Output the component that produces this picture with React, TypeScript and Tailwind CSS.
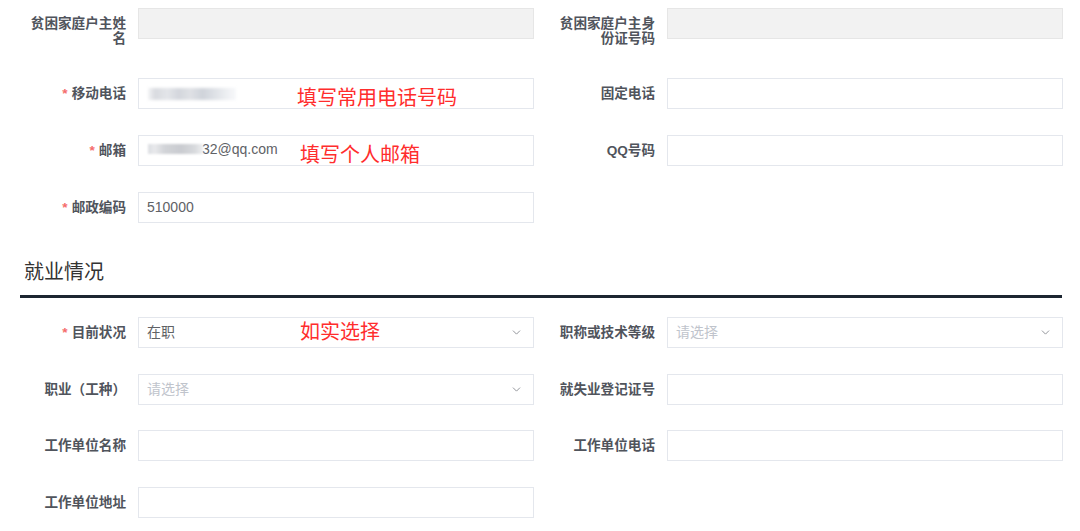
import React from "react";
import { ChevronDown } from "lucide-react";

const FONT = { fontFamily: '"Liberation Sans", "Noto Sans CJK SC", sans-serif' };

function Label({ text, required }: { text: string; required?: boolean }) {
  return (
    <div className="flex justify-end pr-3 w-full">
      <div className="w-[104px] text-right pt-[8px] text-[13.6px] leading-[15px] font-bold text-[#50545c]">
        {required && <span className="text-[#f56c6c] mr-[4px] font-bold">*</span>}
        {text}
      </div>
    </div>
  );
}

function Input({
  disabled,
  children,
  select,
  placeholder,
}: {
  disabled?: boolean;
  children?: React.ReactNode;
  select?: boolean;
  placeholder?: string;
}) {
  return (
    <div
      className={
        "relative w-[396px] h-[31px] border flex items-center px-[8px] text-[14px] text-[#606266] " +
        (disabled ? "bg-[#f2f2f2] border-[#e6e6e6]" : "bg-white border-[#e4e7ed]")
      }
    >
      {placeholder ? <span className="text-[#c0c4cc]">{placeholder}</span> : children}
      {select && (
        <ChevronDown size={13} strokeWidth={1.8} className="absolute right-[10px] top-[8px] text-[#909399]" />
      )}
    </div>
  );
}

function Field({
  label,
  required,
  labelW,
  children,
}: {
  label: string;
  required?: boolean;
  labelW: string;
  children: React.ReactNode;
}) {
  return (
    <div className="flex items-start">
      <div className={labelW}>
        <Label text={label} required={required} />
      </div>
      {children}
    </div>
  );
}

function Row({ className, children }: { className?: string; children: React.ReactNode }) {
  return <div className={"flex items-start gap-[4px] h-[31px] " + (className || "")}>{children}</div>;
}

const Note = ({ text, className }: { text: string; className: string }) => (
  <span className={"absolute text-[20px] leading-[24px] text-[#ff2d2d] " + className}>{text}</span>
);

export default function App() {
  const L = "w-[138px] shrink-0";
  const R = "w-[129px] shrink-0";
  return (
    <div className="w-[1080px] h-[531px] bg-white pt-[8px] overflow-hidden" style={FONT}>
      <Row className="mb-[39px]">
        <Field label="贫困家庭户主姓名" labelW={L}>
          <Input disabled />
        </Field>
        <Field label="贫困家庭户主身份证号码" labelW={R}>
          <Input disabled />
        </Field>
      </Row>
      <Row className="mb-[26px]">
        <Field label="移动电话" required labelW={L}>
          <Input>
            <div
              className="w-[88px] h-[12px] mt-[1px] ml-[1px]"
              style={{
                background:
                  "linear-gradient(90deg,#f3f4f6 0%,#d8dadf 8%,#e3e5e9 22%,#d3d6dc 35%,#dfe1e5 48%,#cfd3da 62%,#dde0e5 75%,#eef0f3 90%,#f7f8fa 100%)",
                filter: "blur(1.5px)",
              }}
            />
            <Note text="填写常用电话号码" className="left-[158px] top-[7px]" />
          </Input>
        </Field>
        <Field label="固定电话" labelW={R}>
          <Input />
        </Field>
      </Row>
      <Row className="mb-[26px]">
        <Field label="邮箱" required labelW={L}>
          <Input>
            <div className="flex items-center -mt-[3px]">
              <div
                className="w-[55px] h-[10px] ml-[1px]"
                style={{
                  background:
                    "linear-gradient(90deg,#dcdee2 0%,#e8e9ec 12%,#d2d4d8 30%,#c9cbd0 60%,#d8dadd 85%,#eeeff1 100%)",
                  filter: "blur(1.2px)",
                }}
              />
              <span className="text-[14px] text-[#606266] -ml-[1px]">32@qq.com</span>
            </div>
            <Note text="填写个人邮箱" className="left-[161px] top-[7px]" />
          </Input>
        </Field>
        <Field label="QQ号码" labelW={R}>
          <Input />
        </Field>
      </Row>
      <Row>
        <Field label="邮政编码" required labelW={L}>
          <Input>510000</Input>
        </Field>
      </Row>

      <div className="ml-[24px] mt-[35px] text-[20px] leading-[28px] text-[#333]">就业情况</div>
      <div className="ml-[20px] w-[1042px] h-[3px] bg-[#1c2631] mt-[9px] mb-[19px]" />

      <Row className="mb-[26px]">
        <Field label="目前状况" required labelW={L}>
          <Input select>
            在职
            <Note text="如实选择" className="left-[161px] top-[2px]" />
          </Input>
        </Field>
        <Field label="职称或技术等级" labelW={R}>
          <Input select placeholder="请选择" />
        </Field>
      </Row>
      <Row className="mb-[25px]">
        <Field label="职业（工种）" labelW={L}>
          <Input select placeholder="请选择" />
        </Field>
        <Field label="就失业登记证号" labelW={R}>
          <Input />
        </Field>
      </Row>
      <Row className="mb-[26px]">
        <Field label="工作单位名称" labelW={L}>
          <Input />
        </Field>
        <Field label="工作单位电话" labelW={R}>
          <Input />
        </Field>
      </Row>
      <Row>
        <Field label="工作单位地址" labelW={L}>
          <Input />
        </Field>
      </Row>
    </div>
  );
}
